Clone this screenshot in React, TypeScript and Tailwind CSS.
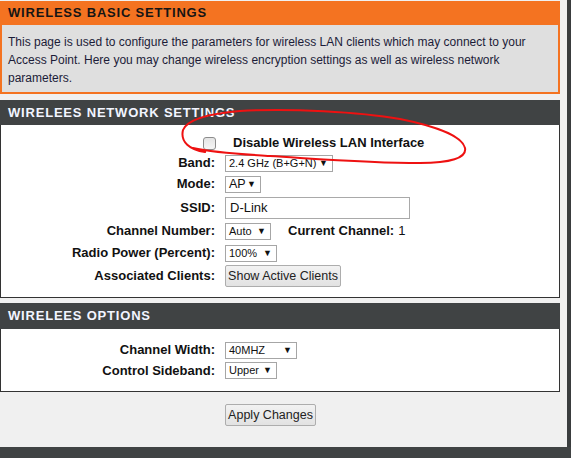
import React from "react";

const font = "font-['Liberation_Sans',Arial,sans-serif]";

const FakeSelect = ({ value, width, big }: { value: string; width: string; big?: boolean }) => (
  <div className={`flex h-[17px] items-center border border-[#a6a6a6] bg-white pl-[3px] pr-[4px] text-[#111] ${width}`}>
    <span className={big ? "text-[12.5px]" : "text-[11px]"}>{value}</span>
    <span className="ml-auto text-[9px] leading-none">▼</span>
  </div>
);

const Row = ({ label, h, children }: { label: string; h: string; children: React.ReactNode }) => (
  <div className={`flex items-center ${h}`}>
    <div className="w-[214px] text-right text-[13px] font-bold text-[#111]">{label}</div>
    <div className="ml-[10px] flex items-center">{children}</div>
  </div>
);

const SectionHead = ({ title, h }: { title: string; h: string }) => (
  <div className={`flex items-center bg-[#404344] px-[8px] ${h}`}>
    <span className="text-[13px] font-bold tracking-[0.8px] text-[#f2f5ff]">{title}</span>
  </div>
);

export default function App() {
  return (
    <div className={`relative flex h-[458px] w-[571px] flex-col bg-[#f0f0f0] ${font}`}>
      <div className="flex flex-1">
        <div className="flex w-[560px] flex-col">
          <div className="mt-[1px] flex h-[24px] items-center bg-[#f47321] px-[8px]">
            <span className="text-[13px] font-bold tracking-[0.8px] text-[#151515]">WIRELESS BASIC SETTINGS</span>
          </div>
          <div className="border-x-2 border-b-2 border-[#f47321] bg-[#dfdfdf] px-[6px] pt-[8px] pb-[5px] text-[12px] leading-[18px] text-[#1c1c38]">
            This page is used to configure the parameters for wireless LAN clients which may connect to your Access Point. Here you may change wireless encryption settings as well as wireless network parameters.
          </div>

          <div className="mt-[6px]">
            <SectionHead title="WIRELEES NETWORK SETTINGS" h="h-[25px]" />
            <div className="h-[173px] border-x border-b border-[#333] bg-white pt-[8px]">
              <div className="flex h-[20px] items-center">
                <div className="flex w-[215px] justify-end">
                  <div className="h-[13px] w-[13px] rounded-[3px] border border-[#8c8c8c] bg-gradient-to-b from-[#e4e4e4] to-[#f6f6f6]" />
                </div>
                <span className="ml-[17px] text-[13px] font-bold text-[#111]">Disable Wireless LAN Interface</span>
              </div>
              <Row label="Band:" h="h-[20px]">
                <FakeSelect value="2.4 GHz (B+G+N)" width="w-[108px]" />
              </Row>
              <Row label="Mode:" h="h-[22px]">
                <FakeSelect value="AP" width="w-[36px]" big />
              </Row>
              <Row label="SSID:" h="h-[26px]">
                <div className="flex h-[22px] w-[185px] items-center border border-[#a9a9a9] bg-white px-[4px] text-[13px] text-[#111]">D-Link</div>
              </Row>
              <Row label="Channel Number:" h="h-[20px]">
                <FakeSelect value="Auto" width="w-[46px]" />
                <span className="ml-[17px] text-[13px] font-bold text-[#111]">Current Channel:</span>
                <span className="ml-[4px] text-[13px] text-[#111]">1</span>
              </Row>
              <Row label="Radio Power (Percent):" h="h-[24px]">
                <FakeSelect value="100%" width="w-[52px]" />
              </Row>
              <Row label="Associated Clients:" h="h-[22px]">
                <button className="h-[22px] w-[116px] whitespace-nowrap rounded-[2px] border border-[#adadad] bg-gradient-to-b from-[#f2f2f2] to-[#e2e2e2] text-[12.5px] text-[#222]">
                  Show Active Clients
                </button>
              </Row>
            </div>
          </div>

          <div className="mt-[5px]">
            <SectionHead title="WIRELEES OPTIONS" h="h-[26px]" />
            <div className="h-[63px] border-x border-b border-[#333] bg-white pt-[11px]">
              <Row label="Channel Width:" h="h-[20px]">
                <FakeSelect value="40MHZ" width="w-[72px]" />
              </Row>
              <Row label="Control Sideband:" h="h-[21px]">
                <FakeSelect value="Upper" width="w-[52px]" />
              </Row>
            </div>
          </div>

          <div className="flex flex-1 pt-[12px] pl-[225px]">
            <button className="h-[22px] w-[91px] whitespace-nowrap rounded-[2px] border border-[#adadad] bg-gradient-to-b from-[#f2f2f2] to-[#e2e2e2] text-[12.5px] text-[#222]">
              Apply Changes
            </button>
          </div>
        </div>
        <div className="w-[7px]" />
        <div className="w-[4px] bg-[#3a3d3e]" />
      </div>
      <div className="h-[11px] bg-[#404344]" />

      <svg className="pointer-events-none absolute left-0 top-0" width="571" height="458" viewBox="0 0 571 458">
        <path
          d="M 205 152 C 190 150, 180 142, 183 130 C 187 120, 205 114, 240 111 C 290 108, 360 112, 400 119 C 430 125, 462 135, 465 148 C 467 158, 450 163, 420 163 C 370 163, 320 159, 270 156 C 240 154, 215 153, 193 148"
          fill="none"
          stroke="#ee1111"
          strokeWidth="2"
          strokeLinecap="round"
        />
      </svg>
    </div>
  );
}
